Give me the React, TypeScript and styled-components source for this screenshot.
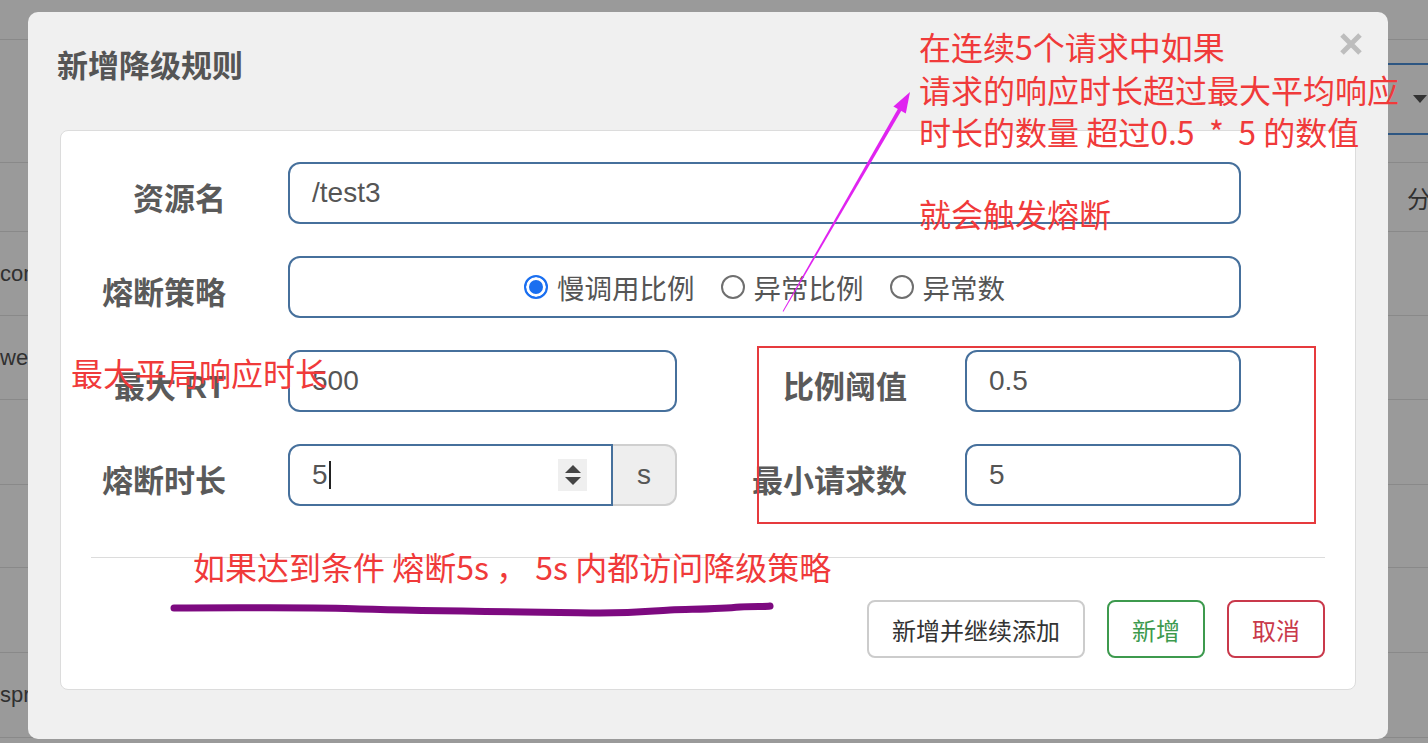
import React from "react";
import styled, { createGlobalStyle } from "styled-components";

const GlobalStyle = createGlobalStyle`
  html, body {
    margin: 0;
    padding: 0;
    background: #9a9a9a;
  }
`;

const CJK = `"Noto Sans CJK SC", "Liberation Sans", sans-serif`;
const LATIN = `"Liberation Sans", "Noto Sans CJK SC", sans-serif`;

const Page = styled.div`
  position: relative;
  width: 1428px;
  height: 743px;
  overflow: hidden;
  background: #9a9a9a;
`;

// the list page behind the dialog
const Backdrop = styled.div`
  display: flex;
  flex-direction: column;
`;

const BgRow = styled.div<{ $h: number }>`
  height: ${(p) => p.$h}px;
  box-sizing: border-box;
  border-bottom: 1px solid #898989;
  display: flex;
  align-items: center;
  font: 22px ${LATIN};
  color: #303030;
  white-space: nowrap;
`;

const BgCell = styled.span`
  padding-left: 0;
`;

const BgRight = styled.span`
  margin-left: auto;
  width: 21px;
  overflow: hidden;
  font: 24px ${CJK};
  color: #303030;
`;

const BgSelect = styled.div`
  margin-left: auto;
  margin-right: -20px;
  margin-top: -4px;
  width: 300px;
  height: 72px;
  box-sizing: border-box;
  border-top: 2px solid #2d5682;
  border-bottom: 2px solid #2d5682;
  display: flex;
  align-items: center;
  justify-content: flex-end;
  padding-right: 21px;
`;

const BgCaret = styled.span`
  width: 0;
  height: 0;
  border-left: 7px solid transparent;
  border-right: 7px solid transparent;
  border-top: 8px solid #333;
`;

// dialog
const Modal = styled.div`
  position: absolute;
  left: 28px;
  top: 12px;
  width: 1360px;
  height: 727px;
  background: #f0f0f0;
  border-radius: 10px;
  display: flex;
  flex-direction: column;
`;

const Header = styled.div`
  height: 118px;
  display: flex;
  align-items: flex-start;
  padding: 0 25px 0 29px;
`;

const Title = styled.h4`
  margin: 33px 0 0;
  font: 700 31px/38px ${CJK};
  color: #555;
`;

const CloseBtn = styled.button`
  margin: 20px 0 0 auto;
  padding: 0;
  border: none;
  background: none;
  width: 24px;
  height: 24px;
  display: flex;
`;

const Card = styled.div`
  margin: 0 32px;
  height: 560px;
  box-sizing: border-box;
  background: #fff;
  border: 1px solid #dcdcdc;
  border-radius: 8px;
  padding: 31px 30px 0 30px;
  display: flex;
  flex-direction: column;
`;

const Form = styled.div`
  display: grid;
  grid-template-columns: 197px 389px 288px 276px;
  grid-auto-rows: 62px;
  row-gap: 32px;
`;

const Label = styled.label<{ $pad?: number }>`
  display: flex;
  align-items: center;
  justify-content: flex-end;
  padding: 7px ${(p) => p.$pad ?? 62}px 0 0;
  font: 700 31px ${LATIN};
  color: #5a5a5a;
  white-space: nowrap;
`;

const Field = styled.div<{ $span?: string; $joined?: boolean }>`
  grid-column: ${(p) => p.$span ?? "auto"};
  position: relative;
  height: 62px;
  box-sizing: border-box;
  border: 2px solid #46709c;
  border-radius: ${(p) => (p.$joined ? "12px 0 0 12px" : "12px")};
  padding: 0 22px;
  display: flex;
  align-items: center;
  font: 28px ${LATIN};
  color: #555;
  background: #fff;
  flex: ${(p) => (p.$joined ? "1" : "none")};
`;

const RadioRow = styled(Field)`
  justify-content: center;
  gap: 26px;
  font: 27.5px ${CJK};
`;

const RadioItem = styled.span`
  display: flex;
  align-items: center;
  gap: 9px;
  color: #555;
`;

const RadioDot = styled.span<{ $on?: boolean }>`
  width: 24px;
  height: 24px;
  box-sizing: border-box;
  border-radius: 50%;
  border: 2px solid ${(p) => (p.$on ? "#1a6ff0" : "#6f6f6f")};
  background: ${(p) => (p.$on ? "#1a6ff0" : "#fff")};
  box-shadow: ${(p) => (p.$on ? "inset 0 0 0 3px #fff" : "none")};
`;

const Group = styled.div`
  display: flex;
`;

const Addon = styled.div`
  width: 64px;
  height: 62px;
  box-sizing: border-box;
  border: 2px solid #cfcfcf;
  border-left: none;
  border-radius: 0 12px 12px 0;
  background: #eeeeee;
  display: flex;
  align-items: center;
  justify-content: center;
  font: 28px ${LATIN};
  color: #555;
`;

const Caret = styled.span`
  width: 2px;
  height: 28px;
  margin-left: 1px;
  background: #222;
`;

const Spinner = styled.span`
  position: absolute;
  right: 24px;
  top: 13px;
  width: 29px;
  height: 32px;
  background: #efefef;
  display: flex;
  flex-direction: column;
  align-items: center;
  justify-content: center;
  gap: 4px;
`;

const Tri = styled.span<{ $down?: boolean }>`
  width: 0;
  height: 0;
  border-left: 8px solid transparent;
  border-right: 8px solid transparent;
  ${(p) => (p.$down ? "border-top: 8px solid #444;" : "border-bottom: 8px solid #444;")}
`;

const Divider = styled.hr`
  margin: 51px 0 0;
  border: none;
  border-top: 1px solid #dcdcdc;
`;

const Footer = styled.div`
  margin-top: 42px;
  display: flex;
  justify-content: flex-end;
  gap: 22px;
`;

const tones = {
  plain: { border: "#cccccc", color: "#333" },
  ok: { border: "#3d9a4e", color: "#3d9a4e" },
  cancel: { border: "#c9394b", color: "#c9394b" },
};

const Btn = styled.button<{ $tone: keyof typeof tones }>`
  height: 58px;
  padding: 0 23px;
  box-sizing: border-box;
  background: #fff;
  border: 2px solid ${(p) => tones[p.$tone].border};
  border-radius: 8px;
  color: ${(p) => tones[p.$tone].color};
  font: 24px ${CJK};
  min-width: 98px;
`;

// red annotations drawn over the screenshot
const Note = styled.div<{ $x: number; $y: number }>`
  position: absolute;
  left: ${(p) => p.$x}px;
  top: ${(p) => p.$y}px;
  font: 32px/42.5px ${CJK};
  color: #f03a3a;
  white-space: pre;
`;

const RedBox = styled.div`
  position: absolute;
  left: 757px;
  top: 346px;
  width: 559px;
  height: 178px;
  box-sizing: border-box;
  border: 2px solid #e63a3e;
`;

const Overlay = styled.svg`
  position: absolute;
  left: 0;
  top: 0;
  pointer-events: none;
`;

export default function App() {
  return (
    <Page>
      <GlobalStyle />
      <Backdrop>
        <BgRow $h={40} />
        <BgRow $h={123}>
          <BgSelect>
            <BgCaret />
          </BgSelect>
        </BgRow>
        <BgRow $h={69}>
          <BgRight>分</BgRight>
        </BgRow>
        <BgRow $h={84}>
          <BgCell>com</BgCell>
        </BgRow>
        <BgRow $h={84}>
          <BgCell>web</BgCell>
        </BgRow>
        <BgRow $h={85} />
        <BgRow $h={83} />
        <BgRow $h={85} />
        <BgRow $h={85}>
          <BgCell>spring</BgCell>
        </BgRow>
      </Backdrop>

      <Modal>
        <Header>
          <Title>新增降级规则</Title>
          <CloseBtn aria-label="close">
            <svg width="24" height="24" viewBox="0 0 24 24">
              <path d="M3 3 L21 21 M21 3 L3 21" stroke="#bdbdbd" strokeWidth="5" />
            </svg>
          </CloseBtn>
        </Header>
        <Card>
          <Form>
            <Label>资源名</Label>
            <Field $span="2 / 5">/test3</Field>

            <Label>熔断策略</Label>
            <RadioRow $span="2 / 5">
              <RadioItem>
                <RadioDot $on />
                慢调用比例
              </RadioItem>
              <RadioItem>
                <RadioDot />
                异常比例
              </RadioItem>
              <RadioItem>
                <RadioDot />
                异常数
              </RadioItem>
            </RadioRow>

            <Label>最大 RT</Label>
            <Field>500</Field>
            <Label $pad={58}>比例阈值</Label>
            <Field>0.5</Field>

            <Label>熔断时长</Label>
            <Group>
              <Field $joined>
                5
                <Caret />
                <Spinner>
                  <Tri />
                  <Tri $down />
                </Spinner>
              </Field>
              <Addon>s</Addon>
            </Group>
            <Label $pad={58}>最小请求数</Label>
            <Field>5</Field>
          </Form>
          <Divider />
          <Footer>
            <Btn $tone="plain">新增并继续添加</Btn>
            <Btn $tone="ok">新增</Btn>
            <Btn $tone="cancel">取消</Btn>
          </Footer>
        </Card>
      </Modal>

      <Note $x={919} $y={25}>
        {"在连续5个请求中如果\n请求的响应时长超过最大平均响应\n时长的数量 超过0.5  *  5 的数值"}
      </Note>
      <Note $x={919} $y={192}>就会触发熔断</Note>
      <Note $x={71} $y={351}>最大平局响应时长</Note>
      <Note $x={193} $y={545}>如果达到条件 熔断5s ， 5s 内都访问降级策略</Note>
      <RedBox />

      <Overlay width="1428" height="743" viewBox="0 0 1428 743">
        <polygon points="782.6,311.2 783.4,311.8 903.2,107.6 899.8,105.6" fill="#e024f0" />
        <polygon points="910,92 905.8,113.6 893.4,106.4" fill="#e024f0" />
        <path
          d="M174 608 C 260 608, 320 607, 360 609 C 430 611, 520 612, 600 613 C 640 613, 650 611, 670 610 C 700 609, 720 609, 740 607 C 755 606, 765 607, 770 606"
          stroke="#7d0a80"
          strokeWidth="7"
          strokeLinecap="round"
          fill="none"
        />
      </Overlay>
    </Page>
  );
}
